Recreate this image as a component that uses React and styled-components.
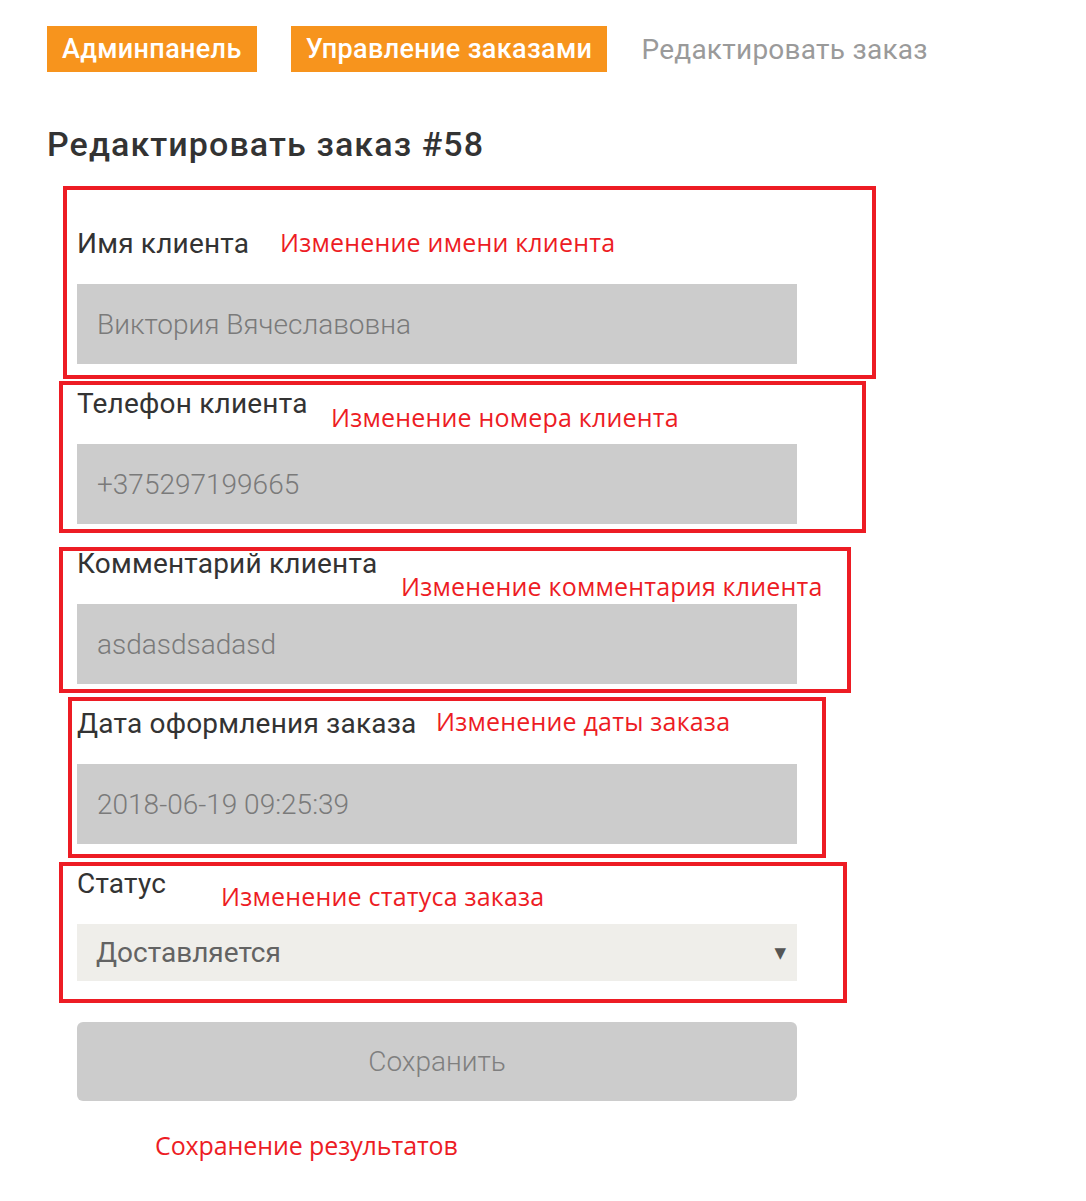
import styled, { createGlobalStyle } from "styled-components";

const GlobalStyle = createGlobalStyle`
  body {
    margin: 0;
    background: #ffffff;
    font-family: Roboto, "Noto Sans", sans-serif;
  }
`;

const Page = styled.div`
  padding: 26px 0 60px 47px;
`;

const Breadcrumbs = styled.nav`
  display: flex;
  align-items: center;
  gap: 34px;
`;

const Crumb = styled.a`
  display: flex;
  align-items: center;
  height: 46px;
  padding: 0 15px;
  background: #f7941d;
  color: #ffffff;
  font-size: 27px;
  font-weight: 500;
  letter-spacing: 0.35px;
  text-decoration: none;
`;

const CurrentCrumb = styled.span`
  font-size: 28px;
  letter-spacing: 0.25px;
  color: #9a9a9a;
`;

const Title = styled.h1`
  margin: 52px 0 63px 0;
  font-size: 34px;
  line-height: 40px;
  font-weight: 500;
  letter-spacing: 1.1px;
  color: #333333;
`;

const Form = styled.form`
  display: flex;
  flex-direction: column;
  gap: 23px;
  margin-left: 30px;
  width: 720px;
`;

const Field = styled.div`
  position: relative;
  display: flex;
  flex-direction: column;
`;

const Label = styled.label`
  font-size: 28px;
  line-height: 34px;
  letter-spacing: 0.2px;
  color: #333333;
  margin-bottom: 23px;
`;

const Input = styled.input`
  box-sizing: border-box;
  width: 720px;
  height: 80px;
  padding: 0 20px;
  border: none;
  outline: none;
  background: #cccccc;
  color: #7a7a7a;
  font-family: Roboto, sans-serif;
  font-size: 28px;
  font-weight: 300;
`;

const SelectBox = styled.div`
  display: flex;
  align-items: center;
  height: 57px;
  background: #efeeea;
  padding: 0 11px 0 19px;
`;

const Select = styled.select`
  flex: 1;
  appearance: none;
  border: none;
  outline: none;
  background: transparent;
  font-family: Roboto, sans-serif;
  font-size: 28px;
  color: #636363;
  padding: 0;
`;

const Arrow = styled.span`
  font-family: "DejaVu Sans", sans-serif;
  font-size: 15px;
  color: #555555;
`;

const SaveButton = styled.button`
  margin-top: 18px;
  height: 79px;
  border: none;
  border-radius: 6px;
  background: #cccccc;
  color: #7f7f7f;
  font-family: Roboto, sans-serif;
  font-size: 28px;
  font-weight: 300;
`;

// red annotation frames drawn over the screenshot
const Frame = styled.div`
  position: absolute;
  box-sizing: border-box;
  border: 4px solid #ed1c24;
  pointer-events: none;
`;

const Note = styled.span`
  position: absolute;
  font-family: "Open Sans", sans-serif;
  font-size: 25px;
  line-height: 28px;
  letter-spacing: 0.2px;
  color: #ed1c24;
  white-space: nowrap;
`;

const SaveNote = styled.p`
  margin: 30px 0 0 108px;
  font-family: "Open Sans", sans-serif;
  font-size: 25px;
  line-height: 28px;
  letter-spacing: -0.1px;
  color: #ed1c24;
`;

const fields = [
  {
    label: "Имя клиента",
    value: "Виктория Вячеславовна",
    note: "Изменение имени клиента",
    noteAt: { left: 203, top: 1 },
    frame: { left: -14, top: -41, width: 813, height: 193 },
  },
  {
    label: "Телефон клиента",
    value: "+375297199665",
    note: "Изменение номера клиента",
    noteAt: { left: 254, top: 16 },
    frame: { left: -18, top: -6, width: 807, height: 152 },
  },
  {
    label: "Комментарий клиента",
    value: "asdasdsadasd",
    note: "Изменение комментария клиента",
    noteAt: { left: 324, top: 25 },
    frame: { left: -18, top: 0, width: 792, height: 146 },
  },
  {
    label: "Дата оформления заказа",
    value: "2018-06-19 09:25:39",
    note: "Изменение даты заказа",
    noteAt: { left: 359, top: 0 },
    frame: { left: -9, top: -10, width: 758, height: 161 },
  },
];

function App() {
  return (
    <Page>
      <GlobalStyle />
      <Breadcrumbs>
        <Crumb href="#">Админпанель</Crumb>
        <Crumb href="#">Управление заказами</Crumb>
        <CurrentCrumb>Редактировать заказ</CurrentCrumb>
      </Breadcrumbs>

      <Title>Редактировать заказ #58</Title>

      <Form onSubmit={(e) => e.preventDefault()}>
        {fields.map((f) => (
          <Field key={f.label}>
            <Label>{f.label}</Label>
            <Input defaultValue={f.value} />
            <Note style={f.noteAt}>{f.note}</Note>
            <Frame style={f.frame} />
          </Field>
        ))}

        <Field>
          <Label>Статус</Label>
          <SelectBox>
            <Select defaultValue="delivering">
              <option value="delivering">Доставляется</option>
            </Select>
            <Arrow>▼</Arrow>
          </SelectBox>
          <Note style={{ left: 144, top: 15 }}>Изменение статуса заказа</Note>
          <Frame style={{ left: -18, top: -5, width: 788, height: 141 }} />
        </Field>

        <SaveButton type="submit">Сохранить</SaveButton>
      </Form>

      <SaveNote>Сохранение результатов</SaveNote>
    </Page>
  );
}

export default App;
